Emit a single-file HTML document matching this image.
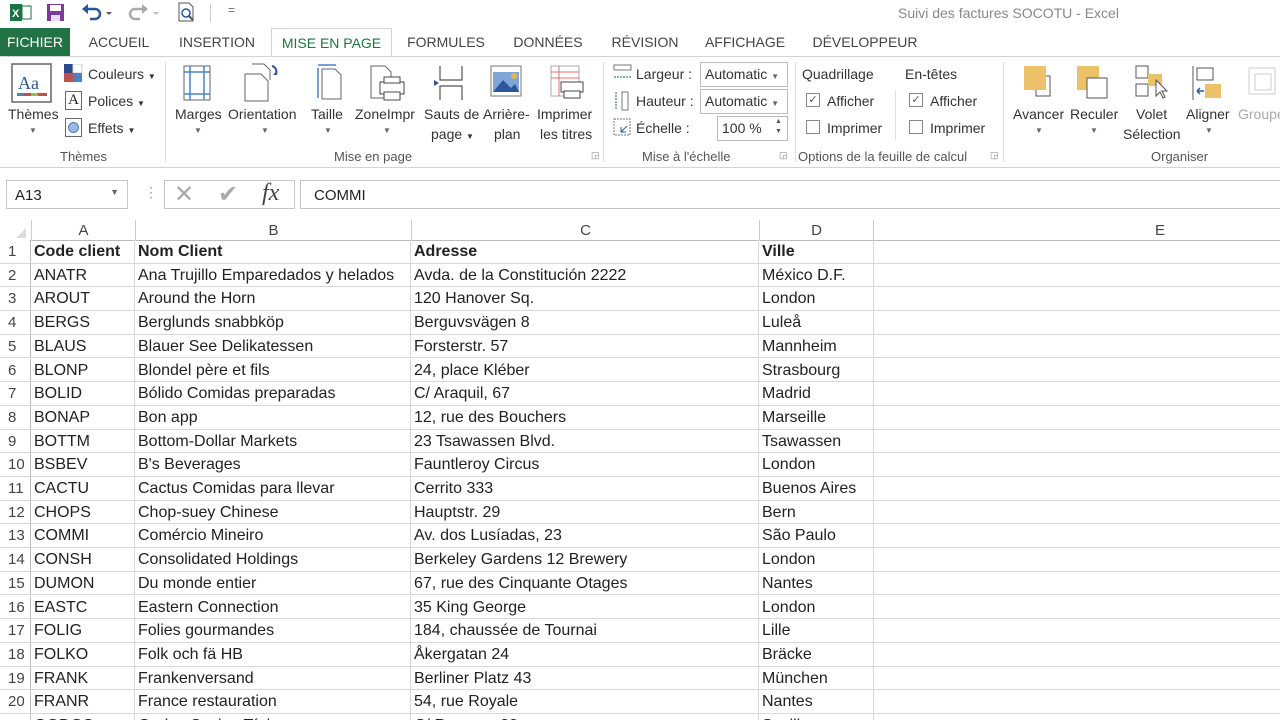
<!DOCTYPE html>
<html style="width:1280px;height:720px;overflow:hidden"><head><meta charset="utf-8"><style>
*{box-sizing:border-box;margin:0;padding:0}
html,body{overflow:hidden}
body{width:1280px;height:720px;overflow:hidden;background:#fff;font-family:"Liberation Sans",sans-serif;color:#222;position:relative}
.a{position:absolute;white-space:nowrap}
.tab{position:absolute;top:28px;height:28px;font-size:14px;line-height:28px;color:#444;text-align:center}
.lbl{font-size:14px;color:#333}
.grp{font-size:13px;color:#555}
.row{position:absolute;left:0;width:1280px;height:23.7px;border-bottom:1px solid #d8d8d8;font-size:16px;line-height:23px}
.row div{position:absolute;top:0;height:100%;border-right:1px solid #d8d8d8;padding-left:3px;overflow:hidden}
.row .n{left:0;width:31px;background:#fff;color:#444;padding-left:8px;font-size:15px;border-right:1px solid #bbb}
.c1{left:31px;width:104px}.c2{left:135px;width:276px}.c3{left:411px;width:348px}.c4{left:759px;width:115px}.c5{left:874px;width:600px}
.b{font-weight:bold}
.ic{position:absolute}
</style></head><body>
<div class="a" style="left:0;top:0;width:1280px;height:28px;background:#fff"></div>
<svg class="ic" style="left:10px;top:3px" width="22" height="20"><rect x="0" y="1" width="12" height="17" fill="#1e7145"/><rect x="12" y="3" width="9" height="13" fill="#fff" stroke="#1e7145"/><text x="2" y="14" font-size="11" fill="#fff" font-family="Liberation Sans" font-weight="bold">X</text></svg>
<svg class="ic" style="left:46px;top:3px" width="20" height="20"><rect x="1" y="1" width="17" height="17" fill="#7a3c96"/><rect x="4" y="2" width="11" height="6" fill="#fff"/><rect x="5" y="12" width="9" height="6" fill="#e8d8f0"/></svg>
<svg class="ic" style="left:80px;top:3px" width="34" height="20"><path d="M6 6h9a5 5 0 0 1 0 10h-5" stroke="#2b579a" stroke-width="2.5" fill="none"/><path d="M2 6l6-5v10z" fill="#2b579a"/><path d="M26 9l3 3 3-3" fill="#555"/></svg>
<svg class="ic" style="left:128px;top:3px" width="34" height="20"><path d="M16 6H7a5 5 0 0 0 0 10h5" stroke="#aaa" stroke-width="2.5" fill="none"/><path d="M20 6l-6-5v10z" fill="#aaa"/><path d="M25 9l3 3 3-3" fill="#bbb"/></svg>
<svg class="ic" style="left:176px;top:1px" width="22" height="22"><path d="M3 2h10l4 4v14H3z" fill="#fff" stroke="#555"/><circle cx="10" cy="12" r="4" fill="none" stroke="#2b579a" stroke-width="1.5"/><path d="M13 15l4 4" stroke="#555" stroke-width="2"/></svg>
<div class="a" style="left:210px;top:4px;width:1px;height:18px;background:#ccc"></div>
<div class="a" style="left:228px;top:3px;font-size:12px;color:#666">=</div>
<div class="a" style="left:898px;top:5px;font-size:14px;color:#888">Suivi des factures SOCOTU - Excel</div>
<div class="tab" style="left:0;width:70px;background:#217346;color:#fff">FICHIER</div>
<div class="tab" style="left:80px;width:78px">ACCUEIL</div>
<div class="tab" style="left:170px;width:94px">INSERTION</div>
<div class="tab" style="left:271px;width:121px;background:#fff;border:1px solid #d4d4d4;border-bottom:none;color:#217346;height:29px">MISE EN PAGE</div>
<div class="tab" style="left:400px;width:92px">FORMULES</div>
<div class="tab" style="left:505px;width:86px">DONNÉES</div>
<div class="tab" style="left:604px;width:82px">RÉVISION</div>
<div class="tab" style="left:697px;width:96px">AFFICHAGE</div>
<div class="tab" style="left:806px;width:118px">DÉVELOPPEUR</div>
<div class="a" style="left:0;top:56px;width:1280px;height:1px;background:#d4d4d4"></div>
<div class="a" style="left:0;top:57px;width:1280px;height:111px;background:#fff"></div>
<div class="a" style="left:0;top:167px;width:1280px;height:1px;background:#d4d4d4"></div>
<div class="a" style="left:0;top:168px;width:1280px;height:45px;background:#fff"></div>
<svg class="ic" style="left:11px;top:63px" width="42" height="40"><rect x="1" y="1" width="39" height="38" fill="#fff" stroke="#666" stroke-width="1.5"/><text x="7" y="26" font-size="18" font-family="Liberation Serif" fill="#2b579a">Aa</text><rect x="6" y="30" width="30" height="3" fill="#c0504d"/><rect x="6" y="30" width="7" height="3" fill="#4f81bd"/><rect x="20" y="30" width="7" height="3" fill="#9bbb59"/></svg>
<div class="a lbl" style="left:8px;top:106px">Thèmes</div>
<div class="a" style="left:29px;top:126px;font-size:8px;color:#666">▼</div>
<svg class="ic" style="left:64px;top:64px" width="20" height="20"><rect width="9" height="9" fill="#2b4a8b"/><rect x="9" width="9" height="9" fill="#fff" stroke="#ccc"/><rect y="9" width="9" height="9" fill="#c0504d"/><rect x="9" y="9" width="9" height="9" fill="#4f81bd"/></svg>
<div class="a lbl" style="left:88px;top:66px">Couleurs <span style="font-size:8px">▼</span></div>
<div class="a" style="left:65px;top:91px;width:17px;height:19px;border:1px solid #666;font-family:'Liberation Serif';font-size:15px;text-align:center;line-height:17px">A</div>
<div class="a lbl" style="left:88px;top:93px">Polices <span style="font-size:8px">▼</span></div>
<div class="a" style="left:65px;top:118px;width:17px;height:19px;border:1px solid #666"><div style="margin:3px 2px;width:11px;height:11px;border-radius:50%;background:#9ab8e0;border:1px solid #4f81bd"></div></div>
<div class="a lbl" style="left:88px;top:120px">Effets <span style="font-size:8px">▼</span></div>
<div class="a grp" style="left:60px;top:149px">Thèmes</div>
<div class="a" style="left:165px;top:62px;width:1px;height:100px;background:#e2e2e2"></div>
<svg class="ic" style="left:182px;top:64px" width="32" height="38"><rect x="2" y="2" width="26" height="34" fill="#fff" stroke="#666"/><path d="M8 2v34M22 2v34M2 8h26M2 30h26" stroke="#4f81bd" stroke-width="1.5"/></svg>
<svg class="ic" style="left:242px;top:62px" width="40" height="40"><path d="M3 12h16l7 7v20H3z" fill="#fff" stroke="#666"/><path d="M10 2h12l6 6v10" fill="none" stroke="#666"/><path d="M30 4a6 6 0 0 1 4 8" stroke="#2b579a" stroke-width="2" fill="none"/><path d="M31 13l4 0 0-4" fill="#2b579a"/></svg>
<svg class="ic" style="left:313px;top:63px" width="32" height="38"><path d="M5 2h18M5 5v30" stroke="#4f81bd" stroke-width="1.5"/><path d="M9 6h13l6 6v24H9z" fill="#fff" stroke="#666"/></svg>
<svg class="ic" style="left:368px;top:64px" width="40" height="38"><path d="M3 2h14l6 6v26H3z" fill="#fff" stroke="#666"/><rect x="12" y="18" width="24" height="12" fill="#fff" stroke="#444"/><rect x="16" y="13" width="16" height="6" fill="#fff" stroke="#444"/><rect x="16" y="28" width="16" height="8" fill="#fff" stroke="#444"/></svg>
<svg class="ic" style="left:432px;top:64px" width="34" height="38"><path d="M8 2v14h22V2M8 36V22h22v14" fill="none" stroke="#555" stroke-width="1.2"/><path d="M2 16l5 3-5 3z" fill="#2b579a"/></svg>
<svg class="ic" style="left:489px;top:64px" width="36" height="38"><rect x="2" y="2" width="30" height="30" fill="#fff" stroke="#777"/><rect x="4" y="8" width="26" height="20" fill="#7fa6d8"/><path d="M4 28l10-12 8 8 4-4 4 8z" fill="#2b579a"/><circle cx="25" cy="12" r="3" fill="#e8b84a"/></svg>
<svg class="ic" style="left:549px;top:64px" width="36" height="38"><rect x="2" y="2" width="28" height="30" fill="#fff" stroke="#aaa"/><path d="M2 8h28M10 2v30M2 14h28" stroke="#e07070"/><rect x="12" y="18" width="22" height="10" fill="#fff" stroke="#444"/><rect x="15" y="27" width="16" height="7" fill="#fff" stroke="#444"/></svg>
<div class="a lbl" style="left:175px;top:106px">Marges</div><div class="a" style="left:194px;top:126px;font-size:8px;color:#666">▼</div>
<div class="a lbl" style="left:228px;top:106px">Orientation</div><div class="a" style="left:261px;top:126px;font-size:8px;color:#666">▼</div>
<div class="a lbl" style="left:311px;top:106px">Taille</div><div class="a" style="left:324px;top:126px;font-size:8px;color:#666">▼</div>
<div class="a lbl" style="left:355px;top:106px">ZoneImpr</div><div class="a" style="left:383px;top:126px;font-size:8px;color:#666">▼</div>
<div class="a lbl" style="left:424px;top:106px">Sauts de</div><div class="a lbl" style="left:431px;top:126px">page <span style="font-size:8px">▼</span></div>
<div class="a lbl" style="left:483px;top:106px">Arrière-</div><div class="a lbl" style="left:494px;top:126px">plan</div>
<div class="a lbl" style="left:537px;top:106px">Imprimer</div><div class="a lbl" style="left:540px;top:126px">les titres</div>
<div class="a grp" style="left:334px;top:149px">Mise en page</div>
<div class="a" style="left:591px;top:150px;font-size:9px;color:#888">◲</div>
<div class="a" style="left:603px;top:62px;width:1px;height:100px;background:#e2e2e2"></div>
<svg class="ic" style="left:612px;top:64px" width="22" height="20"><rect x="2" y="1" width="17" height="5" fill="#fff" stroke="#777"/><path d="M2 13h17" stroke="#2b579a" stroke-dasharray="2 1"/></svg>
<div class="a lbl" style="left:636px;top:66px">Largeur :</div>
<svg class="ic" style="left:612px;top:91px" width="22" height="20"><path d="M4 1v18" stroke="#2b579a" stroke-dasharray="2 1"/><rect x="10" y="1" width="6" height="18" fill="#fff" stroke="#777"/></svg>
<div class="a lbl" style="left:636px;top:93px">Hauteur :</div>
<svg class="ic" style="left:612px;top:118px" width="22" height="20"><rect x="2" y="1" width="16" height="16" fill="none" stroke="#777" stroke-dasharray="2 1"/><path d="M9 14l6-6M9 9v5h5" stroke="#2b579a" fill="none"/></svg>
<div class="a lbl" style="left:636px;top:120px">Échelle :</div>
<div class="a lbl" style="left:700px;top:62px;width:88px;height:25px;border:1px solid #bbb;padding:3px 4px">Automatic <span style="font-size:8px;color:#666">▼</span></div>
<div class="a lbl" style="left:700px;top:89px;width:88px;height:25px;border:1px solid #bbb;padding:3px 4px">Automatic <span style="font-size:8px;color:#666">▼</span></div>
<div class="a lbl" style="left:717px;top:116px;width:71px;height:25px;border:1px solid #bbb;padding:3px 4px">100 %</div>
<div class="a" style="left:775px;top:117px;font-size:7px;color:#555;line-height:10px">▲<br>▼</div>
<div class="a grp" style="left:642px;top:149px">Mise à l'échelle</div>
<div class="a" style="left:779px;top:150px;font-size:9px;color:#888">◲</div>
<div class="a" style="left:795px;top:62px;width:1px;height:100px;background:#e2e2e2"></div>
<div class="a lbl" style="left:802px;top:66px">Quadrillage</div>
<div class="a lbl" style="left:905px;top:66px">En-têtes</div>
<div class="a" style="left:806px;top:93px;width:14px;height:14px;border:1px solid #888;font-size:11px;line-height:12px;text-align:center;color:#555">✓</div>
<div class="a lbl" style="left:827px;top:93px">Afficher</div>
<div class="a" style="left:909px;top:93px;width:14px;height:14px;border:1px solid #888;font-size:11px;line-height:12px;text-align:center;color:#555">✓</div>
<div class="a lbl" style="left:930px;top:93px">Afficher</div>
<div class="a" style="left:806px;top:120px;width:14px;height:14px;border:1px solid #888"></div>
<div class="a lbl" style="left:827px;top:120px">Imprimer</div>
<div class="a" style="left:909px;top:120px;width:14px;height:14px;border:1px solid #888"></div>
<div class="a lbl" style="left:930px;top:120px">Imprimer</div>
<div class="a" style="left:895px;top:90px;width:1px;height:50px;background:#e2e2e2"></div>
<div class="a grp" style="left:798px;top:149px">Options de la feuille de calcul</div>
<div class="a" style="left:990px;top:150px;font-size:9px;color:#888">◲</div>
<div class="a" style="left:1003px;top:62px;width:1px;height:100px;background:#e2e2e2"></div>
<svg class="ic" style="left:1022px;top:64px" width="36" height="38"><rect x="14" y="12" width="14" height="20" fill="#fff" stroke="#555"/><rect x="2" y="2" width="22" height="24" fill="#edc06a"/></svg>
<svg class="ic" style="left:1075px;top:64px" width="36" height="38"><rect x="2" y="2" width="22" height="24" fill="#edc06a"/><rect x="12" y="14" width="20" height="20" fill="#fff" stroke="#555"/></svg>
<svg class="ic" style="left:1134px;top:64px" width="36" height="38"><rect x="2" y="2" width="12" height="12" fill="#fff" stroke="#555"/><rect x="2" y="20" width="12" height="12" fill="#fff" stroke="#555"/><rect x="14" y="10" width="14" height="12" fill="#edc06a"/><path d="M22 16v16l4-4 3 6 2-1-3-6h5z" fill="#fff" stroke="#555"/></svg>
<svg class="ic" style="left:1190px;top:64px" width="36" height="38"><path d="M3 2v34" stroke="#555"/><rect x="7" y="4" width="16" height="12" fill="#fff" stroke="#555"/><rect x="15" y="20" width="16" height="14" fill="#edc06a"/><path d="M7 27h7M7 27l3-3M7 27l3 3" stroke="#2b579a" stroke-width="1.5"/></svg>
<svg class="ic" style="left:1245px;top:64px" width="35" height="38"><rect x="4" y="4" width="26" height="26" fill="none" stroke="#ccc"/><rect x="10" y="10" width="16" height="16" fill="none" stroke="#ccc"/></svg>
<div class="a lbl" style="left:1013px;top:106px">Avancer</div><div class="a" style="left:1035px;top:126px;font-size:8px;color:#666">▼</div>
<div class="a lbl" style="left:1070px;top:106px">Reculer</div><div class="a" style="left:1090px;top:126px;font-size:8px;color:#666">▼</div>
<div class="a lbl" style="left:1136px;top:106px">Volet</div><div class="a lbl" style="left:1123px;top:126px">Sélection</div>
<div class="a lbl" style="left:1186px;top:106px">Aligner</div><div class="a" style="left:1205px;top:126px;font-size:8px;color:#666">▼</div>
<div class="a lbl" style="left:1238px;top:106px;color:#aaa">Groupe</div>
<div class="a grp" style="left:1151px;top:149px">Organiser</div>
<div class="a" style="left:6px;top:180px;width:122px;height:29px;border:1px solid #c6c6c6;font-size:15px;padding:6px 8px">A13<span style="position:absolute;right:8px;top:6px;font-size:9px;color:#666">▼</span></div>
<div class="a" style="left:144px;top:184px;font-size:14px;color:#999">⋮</div>
<div class="a" style="left:164px;top:180px;width:131px;height:29px;border:1px solid #c6c6c6"></div>
<div class="a" style="left:174px;top:180px;font-size:24px;color:#aaa;line-height:29px">✕</div>
<div class="a" style="left:218px;top:180px;font-size:24px;color:#aaa;line-height:29px">✔</div>
<div class="a" style="left:262px;top:178px;font-size:24px;font-style:italic;font-family:'Liberation Serif';color:#444;line-height:31px">fx</div>
<div class="a" style="left:300px;top:180px;width:990px;height:29px;border:1px solid #c6c6c6;font-size:15px;padding:6px 13px">COMMI</div>
<div class="a" style="left:0;top:220px;width:1280px;height:21px;border-bottom:1px solid #bbb;font-size:15px;color:#444"></div>
<div class="a" style="left:16px;top:228px;width:0;height:0;border-left:10px solid transparent;border-bottom:10px solid #dcdcdc"></div>
<div class="a" style="left:31px;top:220px;width:104px;height:21px;border-left:1px solid #ccc;text-align:center;font-size:15px;line-height:21px;color:#444">A</div>
<div class="a" style="left:135px;top:220px;width:276px;height:21px;border-left:1px solid #ccc;text-align:center;font-size:15px;line-height:21px;color:#444">B</div>
<div class="a" style="left:411px;top:220px;width:348px;height:21px;border-left:1px solid #ccc;text-align:center;font-size:15px;line-height:21px;color:#444">C</div>
<div class="a" style="left:759px;top:220px;width:115px;height:21px;border-left:1px solid #ccc;border-right:1px solid #ccc;text-align:center;font-size:15px;line-height:21px;color:#444">D</div>
<div class="a" style="left:874px;top:220px;width:572px;height:21px;text-align:center;font-size:15px;line-height:21px;color:#444">E</div>
<div style="position:absolute;left:0;top:240px;width:1280px;height:480px;overflow:hidden">
<div class="row" style="top:0"><div class="n">1</div><div class="c1 b">Code client</div><div class="c2 b">Nom Client</div><div class="c3 b">Adresse</div><div class="c4 b">Ville</div><div class="c5"></div></div>
<div class="row" style="top:23.7px"><div class="n">2</div><div class="c1">ANATR</div><div class="c2">Ana Trujillo Emparedados y helados</div><div class="c3">Avda. de la Constitución 2222</div><div class="c4">México D.F.</div><div class="c5"></div></div>
<div class="row" style="top:47.4px"><div class="n">3</div><div class="c1">AROUT</div><div class="c2">Around the Horn</div><div class="c3">120 Hanover Sq.</div><div class="c4">London</div><div class="c5"></div></div>
<div class="row" style="top:71.1px"><div class="n">4</div><div class="c1">BERGS</div><div class="c2">Berglunds snabbköp</div><div class="c3">Berguvsvägen  8</div><div class="c4">Luleå</div><div class="c5"></div></div>
<div class="row" style="top:94.8px"><div class="n">5</div><div class="c1">BLAUS</div><div class="c2">Blauer See Delikatessen</div><div class="c3">Forsterstr. 57</div><div class="c4">Mannheim</div><div class="c5"></div></div>
<div class="row" style="top:118.5px"><div class="n">6</div><div class="c1">BLONP</div><div class="c2">Blondel père et fils</div><div class="c3">24, place Kléber</div><div class="c4">Strasbourg</div><div class="c5"></div></div>
<div class="row" style="top:142.2px"><div class="n">7</div><div class="c1">BOLID</div><div class="c2">Bólido Comidas preparadas</div><div class="c3">C/ Araquil, 67</div><div class="c4">Madrid</div><div class="c5"></div></div>
<div class="row" style="top:165.9px"><div class="n">8</div><div class="c1">BONAP</div><div class="c2">Bon app</div><div class="c3">12, rue des Bouchers</div><div class="c4">Marseille</div><div class="c5"></div></div>
<div class="row" style="top:189.6px"><div class="n">9</div><div class="c1">BOTTM</div><div class="c2">Bottom-Dollar Markets</div><div class="c3">23 Tsawassen Blvd.</div><div class="c4">Tsawassen</div><div class="c5"></div></div>
<div class="row" style="top:213.3px"><div class="n">10</div><div class="c1">BSBEV</div><div class="c2">B's Beverages</div><div class="c3">Fauntleroy Circus</div><div class="c4">London</div><div class="c5"></div></div>
<div class="row" style="top:237px"><div class="n">11</div><div class="c1">CACTU</div><div class="c2">Cactus Comidas para llevar</div><div class="c3">Cerrito 333</div><div class="c4">Buenos Aires</div><div class="c5"></div></div>
<div class="row" style="top:260.7px"><div class="n">12</div><div class="c1">CHOPS</div><div class="c2">Chop-suey Chinese</div><div class="c3">Hauptstr. 29</div><div class="c4">Bern</div><div class="c5"></div></div>
<div class="row" style="top:284.4px"><div class="n">13</div><div class="c1">COMMI</div><div class="c2">Comércio Mineiro</div><div class="c3">Av. dos Lusíadas, 23</div><div class="c4">São Paulo</div><div class="c5"></div></div>
<div class="row" style="top:308.1px"><div class="n">14</div><div class="c1">CONSH</div><div class="c2">Consolidated Holdings</div><div class="c3">Berkeley Gardens 12  Brewery</div><div class="c4">London</div><div class="c5"></div></div>
<div class="row" style="top:331.8px"><div class="n">15</div><div class="c1">DUMON</div><div class="c2">Du monde entier</div><div class="c3">67, rue des Cinquante Otages</div><div class="c4">Nantes</div><div class="c5"></div></div>
<div class="row" style="top:355.5px"><div class="n">16</div><div class="c1">EASTC</div><div class="c2">Eastern Connection</div><div class="c3">35 King George</div><div class="c4">London</div><div class="c5"></div></div>
<div class="row" style="top:379.2px"><div class="n">17</div><div class="c1">FOLIG</div><div class="c2">Folies gourmandes</div><div class="c3">184, chaussée de Tournai</div><div class="c4">Lille</div><div class="c5"></div></div>
<div class="row" style="top:402.9px"><div class="n">18</div><div class="c1">FOLKO</div><div class="c2">Folk och fä HB</div><div class="c3">Åkergatan 24</div><div class="c4">Bräcke</div><div class="c5"></div></div>
<div class="row" style="top:426.6px"><div class="n">19</div><div class="c1">FRANK</div><div class="c2">Frankenversand</div><div class="c3">Berliner Platz 43</div><div class="c4">München</div><div class="c5"></div></div>
<div class="row" style="top:450.3px"><div class="n">20</div><div class="c1">FRANR</div><div class="c2">France restauration</div><div class="c3">54, rue Royale</div><div class="c4">Nantes</div><div class="c5"></div></div>
<div class="row" style="top:474px"><div class="n">21</div><div class="c1">GODOS</div><div class="c2">Godos Cocina Típica</div><div class="c3">C/ Romero, 33</div><div class="c4">Sevilla</div><div class="c5"></div></div>
</div>
</body></html>
